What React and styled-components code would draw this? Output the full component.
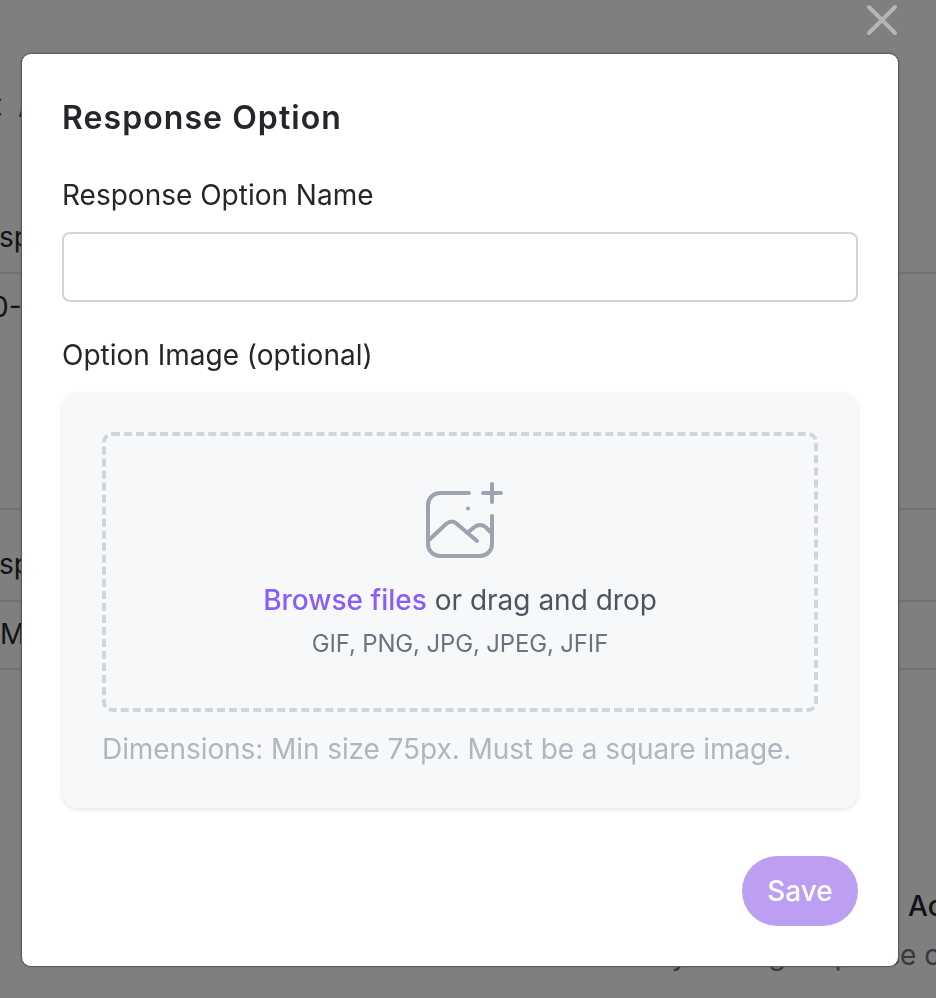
import React from 'react'
import styled, { createGlobalStyle } from 'styled-components'

const Global = createGlobalStyle`
html, body {
  margin: 0;
  height: 100%;
  overflow: hidden;
  font-family: Inter, "Liberation Sans", sans-serif;
}
`

const Page = styled.div`
width: 936px;
height: 998px;
background: #fff;
overflow: hidden;
color: #25262b;
font-size: 28px;
line-height: 32px;
`

const BackSpacer = styled.div`
height: ${(p) => p.$h}px;
`

const NavRow = styled.div`
height: 34px;
display: flex;
align-items: center;
margin-left: -8px;
gap: 16px;
color: #4b5563;
`

const BackRow = styled.div`
height: ${(p) => p.$h}px;
box-sizing: border-box;
padding-top: ${(p) => p.$top}px;
border-bottom: 2px solid #e3e4e8;
white-space: nowrap;
`

const BackText = styled.div`
margin-left: ${(p) => p.$left}px;
margin-top: ${(p) => p.$top || 0}px;
white-space: nowrap;
font-weight: ${(p) => (p.$strong ? 500 : 400)};
color: ${(p) => (p.$muted ? '#6b7280' : 'inherit')};
`

const Overlay = styled.div`
position: fixed;
inset: 0;
background: rgba(0, 0, 0, 0.5);
`

const CloseButton = styled.button`
position: absolute;
top: 4px;
right: 38px;
width: 32px;
height: 32px;
padding: 0;
border: none;
background: none;
`

const Modal = styled.div`
position: absolute;
left: 21px;
top: 53px;
width: 878px;
height: 914px;
box-sizing: border-box;
padding: 42px 40px 40px;
display: flex;
flex-direction: column;
background: #fff;
border: 1px solid #5a5a5c;
border-radius: 10px;
box-shadow: 0 0 2px rgba(0, 0, 0, 0.3);
`

const Title = styled.h2`
margin: 0 0 37px;
font-size: 32px;
line-height: 44px;
font-weight: 600;
letter-spacing: 1.07px;
`

const Label = styled.label`
display: block;
font-size: 28px;
line-height: 36px;
margin-bottom: 19px;
`

const TextInput = styled.input`
display: block;
width: 100%;
height: 70px;
box-sizing: border-box;
margin-bottom: 35px;
border: 2px solid #d1d5db;
border-radius: 8px;
background: #fff;
`

const UploadCard = styled.div`
height: 416px;
box-sizing: border-box;
padding: 40px;
background: #f7f8fa;
border-radius: 16px;
box-shadow: 0 2px 4px rgba(0, 0, 0, 0.1);
`

const DropZone = styled.div`
height: 280px;
box-sizing: border-box;
border: 4px dashed #d1d5db;
border-radius: 10px;
display: flex;
flex-direction: column;
align-items: center;
padding-top: 43px;
`

const DropText = styled.div`
margin-top: 19px;
font-size: 28px;
line-height: 36px;
color: #4b5563;
`

const BrowseLink = styled.span`
color: #8b5cf6;
font-weight: 500;
`

const Formats = styled.div`
margin-top: 10px;
font-size: 24px;
line-height: 32px;
letter-spacing: -0.16px;
color: #6b7280;
`

const Hint = styled.div`
margin-top: 19px;
font-size: 28px;
line-height: 36px;
letter-spacing: -0.08px;
color: #b0b5bf;
white-space: nowrap;
`

const Footer = styled.div`
margin-top: auto;
display: flex;
justify-content: flex-end;
`

const SaveButton = styled.button`
width: 116px;
height: 70px;
border: none;
border-radius: 35px;
background: #bc9ef2;
color: #fff;
font-family: inherit;
font-size: 28px;
font-weight: 500;
`

const UploadIcon = () => (
  <svg width="88" height="84" viewBox="416 478 88 84" fill="none" stroke="#9ca3af" strokeWidth="4" strokeLinecap="round" strokeLinejoin="round">
    <path d="M469 492H440a12 12 0 0 0-12 12v39a12 12 0 0 0 12 12h40a12 12 0 0 0 12-12v-28" />
    <path d="M429 539l17-16q6-5 11 0l20 17" />
    <path d="M469.500 530l5-4q5.500-4 11 0l5 5" />
    <path d="M483 492h18M492 483v18" />
    <circle cx="468" cy="507.500" r="2" fill="#9ca3af" stroke="none" />
  </svg>
)

export default function App() {
  return (
    <Page>
      <Global />
      <BackSpacer $h={90} />
      <NavRow>
        <svg width="10" height="18" viewBox="0 0 10 18" fill="none" stroke="#6d3fd0" strokeWidth="2">
          <path d="M9 1L1 9l8 8" />
        </svg>
        <span>All</span>
      </NavRow>
      <BackSpacer $h={97} />
      <BackRow $h={53} $top={0}><BackText $left={-35}>Response</BackText></BackRow>
      <BackRow $h={236} $top={17}><BackText $left={-9}>0-100</BackText></BackRow>
      <BackRow $h={92} $top={38}><BackText $left={-35}>Response</BackText></BackRow>
      <BackRow $h={68} $top={16}><BackText $left={0}>Manager</BackText></BackRow>
      <BackText $left={908} $top={220} $strong>Actions</BackText>
      <BackText $left={655} $top={17} $muted>by adding response c</BackText>

      <Overlay>
        <CloseButton aria-label="Close">
          <svg width="32" height="32" viewBox="0 0 32 32" stroke="#b3b5b7" strokeWidth="4" strokeLinecap="round">
            <path d="M3 3l26 26M29 3L3 29" />
          </svg>
        </CloseButton>
        <Modal>
          <Title>Response Option</Title>
          <Label>Response Option Name</Label>
          <TextInput />
          <Label>Option Image (optional)</Label>
          <UploadCard>
            <DropZone>
              <UploadIcon />
              <DropText><BrowseLink>Browse files</BrowseLink> or drag and drop</DropText>
              <Formats>GIF, PNG, JPG, JPEG, JFIF</Formats>
            </DropZone>
            <Hint>Dimensions: Min size 75px. Must be a square image.</Hint>
          </UploadCard>
          <Footer><SaveButton>Save</SaveButton></Footer>
        </Modal>
      </Overlay>
    </Page>
  )
}
